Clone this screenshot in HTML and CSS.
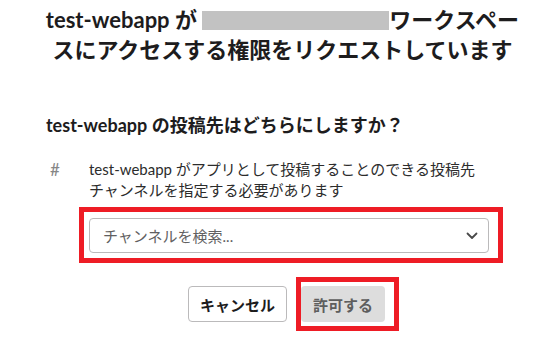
FILE: index.html
```html
<!DOCTYPE html>
<html lang="ja">
<head>
  <meta charset="UTF-8">
  <meta name="viewport" content="width=device-width, initial-scale=1.0">
  <title>test-webapp</title>
  <link rel="stylesheet" href="styles.css">
</head>
<body>
  <div class="page">
    <h1 class="title">test-webapp が <span class="masked"></span>ワークスペースにアクセスする権限をリクエストしています</h1>

    <h2 class="question">test-webapp の投稿先はどちらにしますか？</h2>

    <div class="field">
      <span class="hash">#</span>
      <p class="field-text">test-webapp がアプリとして投稿することのできる投稿先チャンネルを指定する必要があります</p>
    </div>

    <div class="mark mark-select">
      <div class="select">
        <span class="select-placeholder">チャンネルを検索...</span>
        <svg class="chevron" width="12" height="8" viewBox="0 0 12 8" aria-hidden="true">
          <path d="M1.5 1.5 L6 6 L10.5 1.5" fill="none" stroke="#4a4a4a" stroke-width="1.8" stroke-linecap="round" stroke-linejoin="round"/>
        </svg>
      </div>
    </div>

    <div class="actions">
      <button class="btn btn-cancel" type="button">キャンセル</button>
      <div class="mark mark-btn">
        <button class="btn btn-allow" type="button" disabled>許可する</button>
      </div>
    </div>
  </div>
</body>
</html>
```

FILE: styles.css
```css
body {
  margin: 0;
  background: #fff;
  color: #1d1c1d;
  font-family: Lato, "Noto Sans CJK JP", sans-serif;
}

.page {
  width: 473px;
  padding: 1px 0 0 46px;
}

.title {
  margin: 4px -8px 0;
  font-size: 22px;
  font-weight: 700;
  line-height: 30px;
  text-align: center;
}

.masked {
  display: inline-block;
  width: 187px;
  height: 19px;
  background: #c2c2c2;
  vertical-align: -2px;
}

.question {
  margin: 48px 0 0;
  font-size: 18px;
  font-weight: 700;
  line-height: 24px;
}

.field {
  display: flex;
  margin-top: 22px;
}

.hash {
  width: 39px;
  padding-left: 4px;
  color: #868686;
  font-size: 17px;
  line-height: 21px;
}

.field-text {
  margin: 0;
  width: 395px;
  font-size: 15px;
  line-height: 21px;
  color: #2c2c2c;
}

.mark {
  border: 5px solid #ee1c25;
}

.mark-select {
  width: 400px;
  margin: 6px 0 0 33px;
  padding: 6px 9px 5px 5px;
}

.select {
  display: flex;
  align-items: center;
  justify-content: space-between;
  height: 33px;
  padding: 0 10px 0 13px;
  border: 1px solid #bbbabb;
  border-radius: 4px;
}

.select-placeholder {
  font-size: 15px;
  color: #616061;
}

.actions {
  display: flex;
  align-items: center;
  margin-top: 14px;
  padding-left: 142px;
}

.btn {
  height: 36px;
  padding: 0 11px;
  border-radius: 4px;
  font-family: inherit;
  font-size: 15px;
  font-weight: 700;
  white-space: nowrap;
}

.btn-cancel {
  border: 1px solid #bbbabb;
  background: #fff;
  color: #1d1c1d;
}

.mark-btn {
  margin-left: 9px;
  padding: 4px 9px 4px 0;
}

.btn-allow {
  border: 0;
  padding: 0 12px;
  background: #dddddd;
  color: #5e5e5e;
}
```
